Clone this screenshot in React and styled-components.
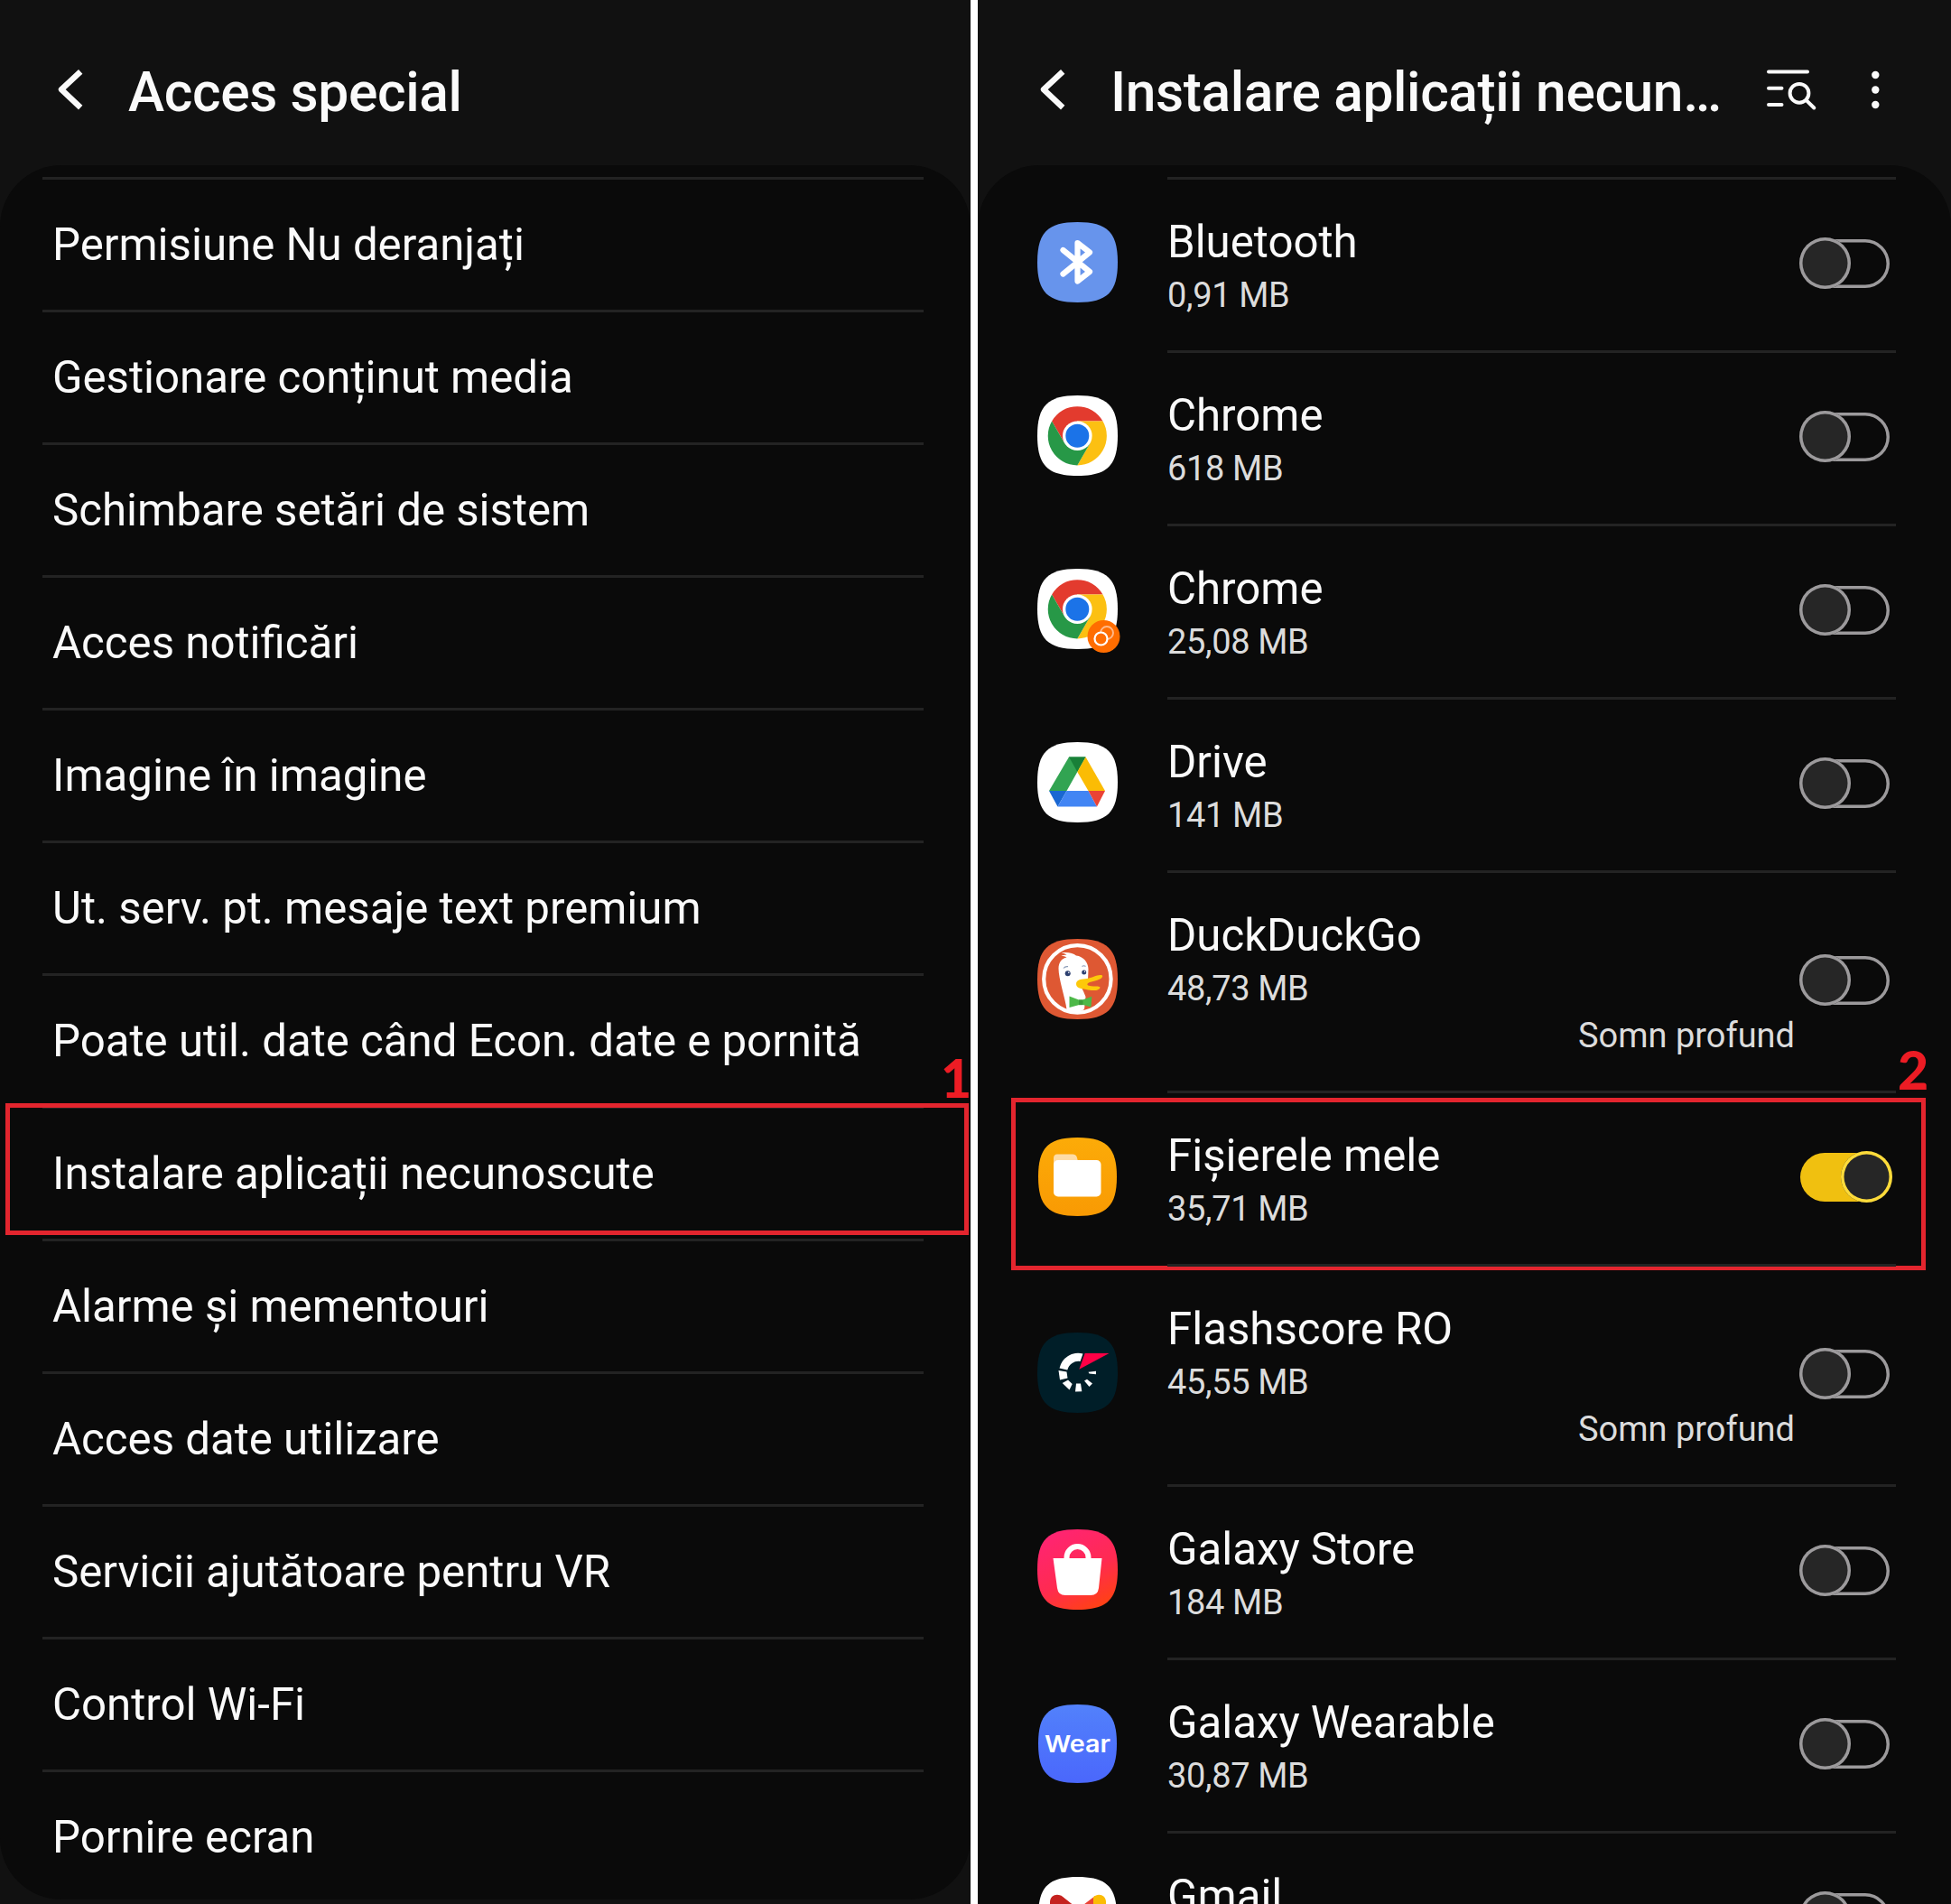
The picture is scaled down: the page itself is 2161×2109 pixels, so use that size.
import React from "react";
import styled, { createGlobalStyle, css } from "styled-components";

const Global = createGlobalStyle`
  * { box-sizing: border-box; }
  body { margin: 0; background: #111; }
`;

const font = `Roboto, "Noto Sans", sans-serif`;

const Page = styled.main`
  display: flex;
  width: 2161px;
  height: 2109px;
  overflow: hidden;
  background: #111111;
  font-family: ${font};
  color: #fafafa;
`;

const Screen = styled.section`
  flex: none;
  width: ${(p) => p.$width}px;
  height: 2109px;
  display: flex;
  flex-direction: column;
  overflow: hidden;
`;

const Divider = styled.div`
  flex: none;
  width: 8px;
  background: #ffffff;
`;

const Header = styled.header`
  flex: none;
  height: 183px;
  display: flex;
  align-items: flex-start;
  padding-top: 64px;
  padding-left: ${(p) => p.$left}px;
`;

const BackArrow = styled.svg`
  flex: none;
  width: 28px;
  height: 56px;
  margin-top: 7px;
  margin-right: 51px;
  overflow: visible;
`;

const Title = styled.h1`
  margin: 1px 0 0;
  flex: none;
  width: ${(p) => (p.$width ? p.$width + "px" : "auto")};
  font-size: 60.5px;
  line-height: 76px;
  font-weight: 500;
  letter-spacing: -0.38px;
  white-space: nowrap;
`;

const HeaderIcon = styled.svg`
  flex: none;
  margin-top: ${(p) => p.$top}px;
  margin-left: ${(p) => p.$gap}px;
`;

const Card = styled.ul`
  list-style: none;
  margin: 0;
  flex: none;
  height: ${(p) => p.$height}px;
  background: #0a0a0a;
  border-radius: 68px;
  padding: 13px ${(p) => p.$right}px 0 ${(p) => p.$left}px;
`;

const Item = styled.li`
  position: relative;
  height: 147px;
  border-top: 3px solid #232323;
  padding-left: 11px;
  font-size: 49.2px;
  line-height: 145px;
  white-space: nowrap;
`;

const AppItem = styled.li`
  position: relative;
  display: flex;
  align-items: center;
  height: ${(p) => (p.$tall ? 244 : 192)}px;
  padding-bottom: 3px;
`;

const AppIcon = styled.svg`
  flex: none;
  width: 93px;
  height: 93px;
  margin: 0 53px 0 -2px;
  overflow: visible;
`;

const AppBody = styled.div`
  position: relative;
  align-self: flex-start;
  width: 807px;
  height: ${(p) => (p.$tall ? 244 : 192)}px;
  border-top: 3px solid #232323;
  padding-top: 39px;
`;

const AppName = styled.div`
  font-size: 49.2px;
  line-height: 60px;
`;

const AppSize = styled.div`
  font-size: 38px;
  line-height: 52px;
  margin-top: 3px;
  letter-spacing: -0.35px;
  color: #dcdcdc;
`;

const SleepNote = styled.div`
  font-size: 38px;
  line-height: 52px;
  color: #dcdcdc;
  text-align: right;
  padding-right: 112px;
`;

const Switch = styled.span`
  flex: none;
  position: relative;
  width: 100px;
  height: 57px;
  margin-left: -107px;
  margin-top: 2px;
`;

const Track = styled.span`
  position: absolute;
  inset: ${(p) => (p.$on ? "2px -1px 1px 1px" : "2px 0 1px 1px")};
  border-radius: 27px;
  ${(p) => p.$on ? css`background: #f0c010;` : css`box-shadow: inset 0 0 0 3.5px #9c9a9c;`}
`;

const Thumb = styled.span`
  position: absolute;
  top: 0;
  left: ${(p) => (p.$on ? 45.5 : 0)}px;
  width: 57px;
  height: 57px;
  border-radius: 50%;
  background: #262626;
  box-shadow: inset 0 0 0 3.5px ${(p) => (p.$on ? "#fddb3a" : "#9c9a9c")};
`;

const Highlight = styled.div`
  position: absolute;
  left: ${(p) => p.$x}px;
  top: ${(p) => p.$y}px;
  width: ${(p) => p.$w}px;
  height: ${(p) => p.$h}px;
  border: 5px solid #e3252e;
`;

const StepNumber = styled.span`
  position: absolute;
  left: ${(p) => p.$x}px;
  top: ${(p) => p.$y}px;
  font: 900 59px/60px Lato, sans-serif;
  letter-spacing: -4px;
  color: #ed1c24;
`;

const Squircle = ({ fill, inset = 0 }) => {
  const s = 1 - inset / 44.5;
  return (
    <path
      transform={`translate(46.5 46.5) scale(${s})`}
      d="M0-44.5C33-44.5 44.5-33 44.5 0C44.5 33 33 44.5 0 44.5C-33 44.5-44.5 33-44.5 0C-44.5-33-33-44.5 0-44.5Z"
      fill={fill}
    />
  );
};

const BluetoothArt = () => (
  <>
    <Squircle fill="#6794ec" />
    <path d="M30.500 33L60 57L46.500 67.500V25L60 35.500L30.500 59.500" fill="none" stroke="#fff" strokeWidth="6.200" strokeLinejoin="round" strokeLinecap="round" />
  </>
);

const ChromeArt = ({ dual }) => (
  <>
    <Squircle fill="#fff" />
    <g transform="translate(46.3 46.8)">
      <path d="M-28.2-16.3A32.6 32.6 0 0 1 28.2-16.3H0L-14.1 8.2Z" fill="#e33b2e" />
      <path d="M28.2-16.3A32.6 32.6 0 0 1 0 32.6L14.1 8.2L0-16.3Z" fill="#fcc012" />
      <path d="M0 32.6A32.6 32.6 0 0 1-28.2-16.3L-14.1 8.2L14.1 8.2Z" fill="#279847" />
      <circle r="16.3" fill="#fff" />
      <circle r="13" fill="#1b73e8" />
    </g>
    {dual && (
      <g>
        <circle cx="75.500" cy="77" r="18" fill="#ff6d00" />
        <circle cx="79" cy="73" r="7" fill="none" stroke="#ffb98a" strokeWidth="1.900" />
        <circle cx="72.500" cy="79.500" r="7" fill="#ff6d00" stroke="#fff" strokeWidth="2.200" />
      </g>
    )}
  </>
);

const DriveArt = () => (
  <>
    <Squircle fill="#fff" />
    <path d="M37 18.500H55.500L46.300 35L34.500 56H15Z" fill="#32a452" />
    <path d="M37 18.500H55.500L46.300 35Z" fill="#188038" />
    <path d="M55.500 18.500L77 56H58.500L46.300 35Z" fill="#fbbc04" />
    <path d="M15 56H34.500L24.500 73.500Z" fill="#1967d2" />
    <path d="M34.500 56H58.500L68 73.500H24.500Z" fill="#4285f4" />
    <path d="M58.500 56H77L68 73.500Z" fill="#ea4335" />
  </>
);

const DuckArt = () => (
  <>
    <Squircle fill="#de5833" />
    <circle cx="46.400" cy="46.400" r="37.200" fill="none" stroke="#fff" strokeWidth="4.200" />
    <path d="M25.500 35C25.500 28 29 23.500 34.500 22.500C32.500 21 31 21 28.500 21C31 19.800 32.500 19.700 34.500 19.800C32.500 18 30.500 17.600 28.500 17.500C36 16.200 41.500 18 45 20.500C53 21.500 58.500 28 58.500 35.500L58 48L50 54L53 60L55.500 66L54 80C48 84 40 83 34.500 80C33 68 25.500 46 25.500 35Z" fill="#fff" />
    <path d="M45 52C45 47 51 46.500 57 46C63 45 70 40.500 74 42.500C75.500 46 68 48 60 50C57 51 56.500 53 59 53.800C64 55.500 69.500 53.300 71.500 55.500C71 60 62 59.500 56 58C49.500 57 45 56 45 52Z" fill="#fdc90a" />
    <path d="M37.500 65.500L48 69.500H52L62.300 65.800L61.500 77.500L52.500 75H48.500L37.500 78Z" fill="#4cb848" />
    <path d="M48 69.500H52.500V75.200H48Z" fill="#3a9c3a" />
    <circle cx="35.700" cy="40.300" r="3" fill="#2d4070" />
    <circle cx="53.700" cy="39" r="2.500" fill="#2d4070" />
    <circle cx="36.800" cy="39.300" r="0.800" fill="#fff" />
    <circle cx="54.500" cy="38.200" r="0.700" fill="#fff" />
    <path d="M31 34.500Q33 32 36 32.700M51.500 32.500Q53.500 31 55.500 32.500" fill="none" stroke="#8d9db8" strokeWidth="1.200" />
  </>
);

const FilesArt = () => (
  <g transform="translate(0 1)">
    <defs>
      <linearGradient id="files" x1="0" y1="0" x2="0" y2="1">
        <stop offset="0" stopColor="#fcab08" />
        <stop offset="1" stopColor="#f99a03" />
      </linearGradient>
    </defs>
    <Squircle fill="url(#files)" inset={1} />
    <path d="M20 40V26Q20 21.500 24 21.500H41Q44.500 21.500 45.500 24L47 29V40Z" fill="#fedca6" />
    <rect x="20" y="28" width="52.500" height="40.500" rx="5" fill="#fff" />
  </g>
);

const FlashArt = () => (
  <>
    <Squircle fill="#001e28" />
    <g fill="#fff">
      <path d="M26.500 41.500A21 21 0 0 1 52.500 25.500L49.500 34A12.500 12.500 0 0 0 35.300 43.500Z" />
      <path d="M25.500 44L34.500 45.500L35.500 52.500L27 54.500Z" />
      <path d="M29.700 58L36 54.500L40.700 59L37.500 65.500Z" />
      <path d="M45 58.500H50L51.300 67.300L44 67.600Z" />
      <path d="M54 55.500L57 53.800L63 58.500L59.500 62Z" />
      <path d="M58.500 45.800L67 44.800V48.300L59.500 47.500Z" />
    </g>
    <path d="M54.700 25H81.500L48.300 42.700Z" fill="#ff0046" />
  </>
);

const StoreArt = () => (
  <>
    <defs>
      <linearGradient id="store" x1="0.250" y1="0" x2="0.750" y2="1">
        <stop offset="0" stopColor="#ff2473" />
        <stop offset="0.550" stopColor="#ff2a52" />
        <stop offset="1" stopColor="#ff4212" />
      </linearGradient>
    </defs>
    <Squircle fill="url(#store)" />
    <path d="M19.500 34H73.500L70 67Q69 75 61 75H33Q25 75 24 67Z" fill="#fff" />
    <path d="M34.500 36V33A12 12 0 0 1 58.500 33V36" fill="none" stroke="#fff" strokeWidth="6" />
  </>
);

const WearArt = () => (
  <g transform="translate(0 1)">
    <defs>
      <linearGradient id="wear" x1="0" y1="0" x2="0" y2="1">
        <stop offset="0" stopColor="#5281fb" />
        <stop offset="1" stopColor="#4a67fc" />
      </linearGradient>
    </defs>
    <Squircle fill="url(#wear)" inset={1} />
    <text x="46.500" y="56" textAnchor="middle" textLength="73" lengthAdjust="spacingAndGlyphs" fontFamily="Inter, sans-serif" fontSize="26" fontWeight="600" fill="#fff">Wear</text>
  </g>
);

const GmailArt = () => (
  <>
    <Squircle fill="#fff" inset={1} />
    <path d="M16 30V70H28V45Z" fill="#4285f4" />
    <path d="M78 30V70H66V45Z" fill="#34a853" />
    <path d="M28 40V23.500L47 38.500L66 24V40L47 54Z" fill="#ea4335" />
    <path d="M16 31C16 22.500 25 20.500 30 25L41 33.800L28 43L16 34Z" fill="#c5221f" />
    <path d="M78 31C78 22.500 69 20.500 64 25.300V41L78 34Z" fill="#fbbc04" />
  </>
);

const settings = [
  "Permisiune Nu deranjați",
  "Gestionare conținut media",
  "Schimbare setări de sistem",
  "Acces notificări",
  "Imagine în imagine",
  "Ut. serv. pt. mesaje text premium",
  "Poate util. date când Econ. date e pornită",
  "Instalare aplicații necunoscute",
  "Alarme și mementouri",
  "Acces date utilizare",
  "Servicii ajutătoare pentru VR",
  "Control Wi-Fi",
  "Pornire ecran",
];

const apps = [
  { name: "Bluetooth", size: "0,91 MB", art: <BluetoothArt /> },
  { name: "Chrome", size: "618 MB", art: <ChromeArt /> },
  { name: "Chrome", size: "25,08 MB", art: <ChromeArt dual /> },
  { name: "Drive", size: "141 MB", art: <DriveArt /> },
  { name: "DuckDuckGo", size: "48,73 MB", art: <DuckArt />, asleep: true },
  { name: "Fișierele mele", size: "35,71 MB", art: <FilesArt />, on: true },
  { name: "Flashscore RO", size: "45,55 MB", art: <FlashArt />, asleep: true },
  { name: "Galaxy Store", size: "184 MB", art: <StoreArt /> },
  { name: "Galaxy Wearable", size: "30,87 MB", art: <WearArt /> },
  { name: "Gmail", size: "", art: <GmailArt /> },
];

const Back = () => (
  <BackArrow viewBox="0 0 28 56" fill="none" stroke="#fafafa" strokeWidth="6.400">
    <path d="M26.200 8.300L5 28.200L26.200 48.200" strokeLinejoin="round" />
  </BackArrow>
);

const Toggle = ({ on }) => (
  <Switch role="switch" aria-checked={!!on}>
    <Track $on={on} />
    <Thumb $on={on} />
  </Switch>
);

export default function App() {
  return (
    <>
      <Global />
      <Page>
        <Screen $width={1075}>
          <Header $left={63}>
            <Back />
            <Title>Acces special</Title>
          </Header>
          <Card $height={1921} $left={47} $right={52}>
            {settings.map((label, i) => (
              <Item key={label}>
                {label}
                {i === 7 && (
                  <>
                    <Highlight $x={-41} $y={-6} $w={1067} $h={146} />
                    <StepNumber $x={995} $y={-64}>1</StepNumber>
                  </>
                )}
              </Item>
            ))}
          </Card>
        </Screen>
        <Divider />
        <Screen $width={1078}>
          <Header $left={68}>
            <Back />
            <Title $width={680}>Instalare aplicații necun…</Title>
            <HeaderIcon $top={12} $gap={47} width="58" height="48" viewBox="0 0 58 48" fill="none" stroke="#fafafa" strokeWidth="4">
              <path d="M2 3.500H45M2 21.700H16.500M2 40H16.500" strokeLinecap="round" />
              <circle cx="36" cy="27.300" r="10.400" />
              <path d="M43.500 34.800L52.300 43.500" strokeLinecap="round" />
            </HeaderIcon>
            <HeaderIcon $top={12} $gap={56} width="12" height="48" viewBox="0 0 12 48" fill="#fafafa">
              <circle cx="6.300" cy="7" r="4.200" />
              <circle cx="6.300" cy="23.500" r="4.200" />
              <circle cx="6.300" cy="40" r="4.200" />
            </HeaderIcon>
          </Header>
          <Card $height={2100} $left={66} $right={0}>
            {apps.map((app, i) => (
              <AppItem key={i} $tall={app.asleep}>
                <AppIcon viewBox="0 0 93 93">{app.art}</AppIcon>
                <AppBody $tall={app.asleep}>
                  <AppName>{app.name}</AppName>
                  <AppSize>{app.size}</AppSize>
                  {app.asleep && <SleepNote>Somn profund</SleepNote>}
                </AppBody>
                <Toggle on={app.on} />
                {app.on && (
                  <>
                    <Highlight $x={-29} $y={8} $w={1013} $h={191} />
                    <StepNumber $x={953} $y={-53}>2</StepNumber>
                  </>
                )}
              </AppItem>
            ))}
          </Card>
        </Screen>
      </Page>
    </>
  );
}
